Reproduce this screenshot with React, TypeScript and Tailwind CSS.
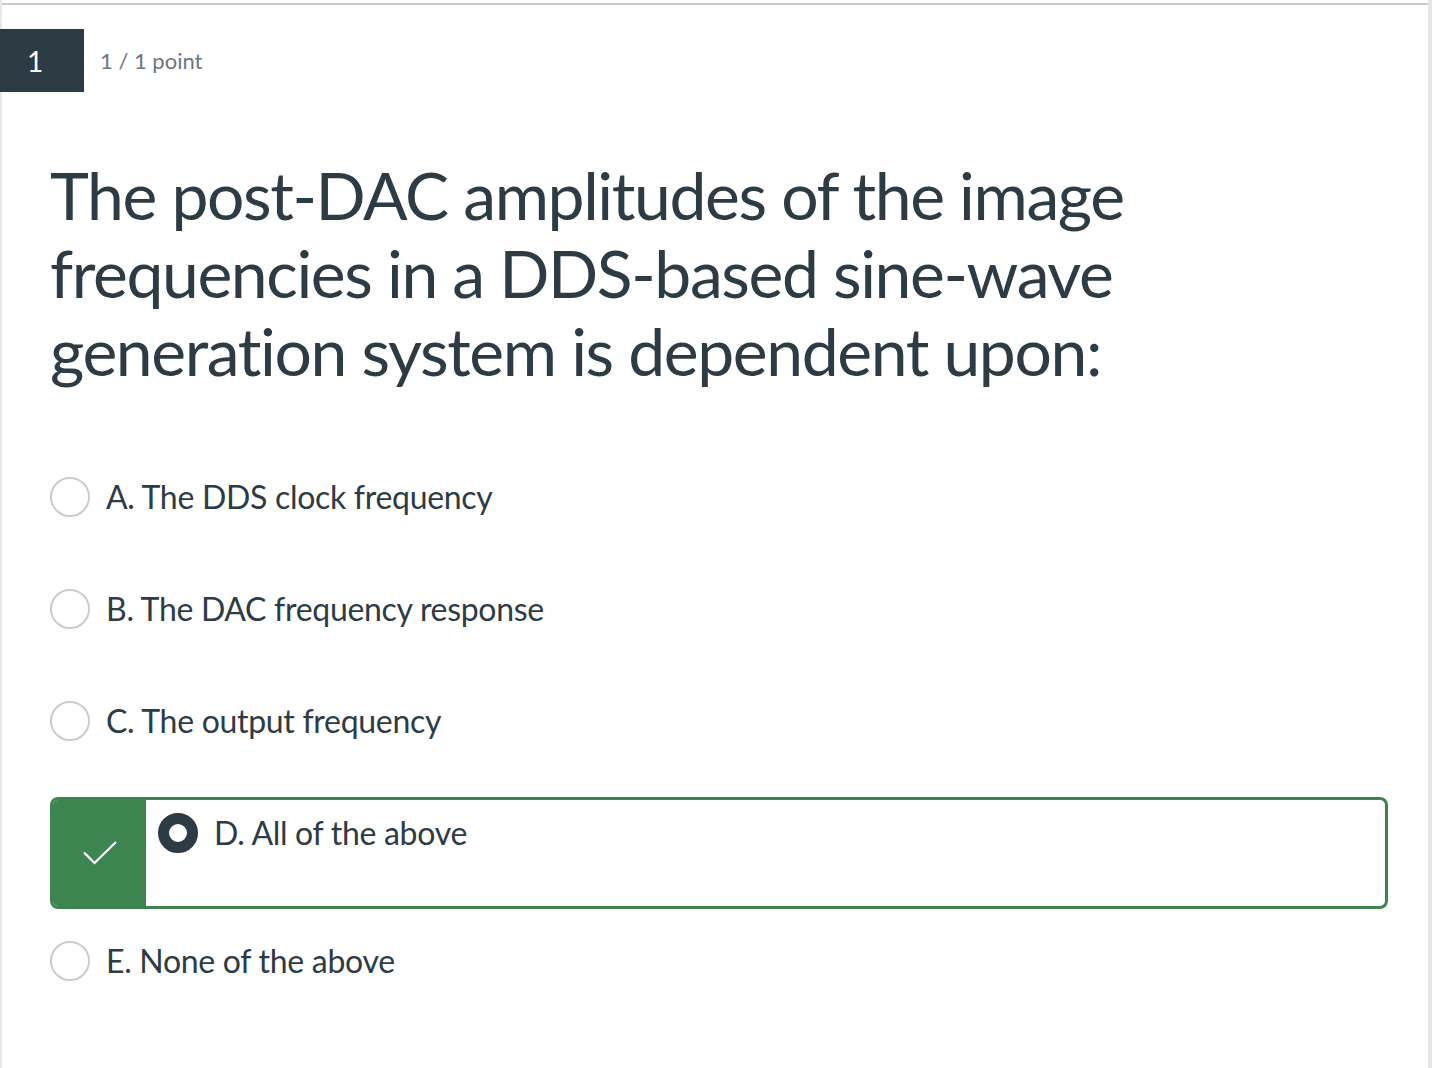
import React from 'react';

const options = [
  { id: 'A', label: 'A. The DDS clock frequency' },
  { id: 'B', label: 'B. The DAC frequency response' },
  { id: 'C', label: 'C. The output frequency' },
  { id: 'D', label: 'D. All of the above', correct: true },
  { id: 'E', label: 'E. None of the above' },
];

function Radio({ checked }: { checked?: boolean }) {
  if (checked) {
    return <span className="block w-10 h-10 shrink-0 rounded-full border-[11px] border-[#2d3b45] bg-white" />;
  }
  return <span className="block w-10 h-10 shrink-0 rounded-full border-2 border-[#c7cdd1] bg-white" />;
}

export default function App() {
  return (
    <div className="w-[1432px] h-[1068px] bg-white flex font-['Lato',sans-serif] text-[#2d3b45] overflow-hidden">
      <div className="w-[2px] bg-[#e8e8e8]" />
      <div className="flex-1 flex flex-col">
        <div className="h-[3px]" />
        <div className="h-[2px] bg-[#c8cbce]" />
        <div className="flex items-center h-[63px] mt-[24px] -ml-[2px]">
          <div className="w-[84px] h-full bg-[#2d3b45] text-white text-[28px] flex items-center pl-[27px]">1</div>
          <div className="ml-4 text-[22px] text-[#6b7780]">1 / 1 point</div>
        </div>
        <div className="pl-[48px] pr-[40px] mt-[64px]">
          <h1 className="text-[66px] leading-[78px] tracking-[-1.4px] max-w-[1140px]">
            The post-DAC amplitudes of the image frequencies in a DDS-based sine-wave generation system is dependent upon:
          </h1>
          <div className="mt-[51px] flex flex-col">
            {options.map((o) =>
              o.correct ? (
                <div
                  key={o.id}
                  className="flex h-[112px] mt-[20px] border-[3px] border-[#3c8551] rounded-lg overflow-hidden"
                >
                  <div className="w-[93px] bg-[#3c8551] flex items-center justify-center">
                    <svg width="36" height="26" viewBox="0 0 36 26" fill="none">
                      <path d="M2 12.5 L12.5 23 L34 2" stroke="white" strokeWidth="2.2" />
                    </svg>
                  </div>
                  <div className="flex items-center self-start mt-[13px] pl-[12px] gap-[16px]">
                    <Radio checked />
                    <span className="text-[32px] leading-[40px] tracking-[-0.3px]">{o.label}</span>
                  </div>
                </div>
              ) : (
                <div key={o.id} className={`flex items-center gap-[16px] ${o.id === 'E' ? 'h-[104px]' : 'h-[112px]'}`}>
                  <Radio />
                  <span className="text-[32px] leading-[40px] tracking-[-0.3px]">{o.label}</span>
                </div>
              )
            )}
          </div>
        </div>
      </div>
      <div className="w-[4px] bg-[#e5e5e5]" />
    </div>
  );
}
